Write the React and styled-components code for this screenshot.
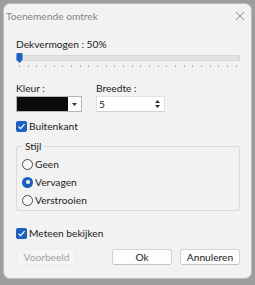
import React from "react";
import styled, { createGlobalStyle } from "styled-components";

const Global = createGlobalStyle`
  html, body { margin: 0; padding: 0; }
  body {
    background: #9d9d9d;
    font-family: Lato, "Noto Sans", sans-serif;
    font-size: 10.2px;
    color: #1b1b1b;
    width: 255px;
    height: 285px;
    overflow: hidden;
  }
`;

const Window = styled.div`
  margin: 3px 0 0 3px;
  width: 249px;
  height: 276px;
  box-sizing: border-box;
  background: #f2f2f2;
  border: 1px solid #bdbdbd;
  border-radius: 7px;
  display: flex;
  flex-direction: column;
  overflow: hidden;
`;

const TitleBar = styled.div`
  height: 23px;
  display: flex;
  align-items: center;
  justify-content: space-between;
  padding: 0 6px 0 2px;
`;

const Title = styled.span`
  color: #858585;
  font-size: 10.2px;
`;

const Content = styled.div`
  padding: 0 11px 0 12px;
  display: flex;
  flex-direction: column;
`;

const Label = styled.div`
  line-height: 14px;
  height: 14px;
  margin-top: ${(p) => p.$mt || 0}px;
  white-space: nowrap;
`;

const SliderWrap = styled.div`
  position: relative;
  margin-top: 2px;
  height: 15px;
`;

const Track = styled.div`
  margin-top: 2px;
  height: 4px;
  background: #e3e3e3;
  border: 1px solid #d6d6d6;
  border-radius: 1px;
`;

const Thumb = styled.svg`
  position: absolute;
  left: 0;
  top: 0;
`;

const Ticks = styled.div`
  display: flex;
  justify-content: space-between;
  padding: 0 3px;
  margin-top: 4px;
`;

const Tick = styled.span`
  width: 1px;
  height: 2px;
  background: #b4b4b4;
`;

const Row = styled.div`
  display: flex;
  gap: ${(p) => p.$gap || 0}px;
  margin-top: ${(p) => p.$mt || 0}px;
`;

const Field = styled.div`
  display: flex;
  flex-direction: column;
  gap: 1px;
  width: ${(p) => p.$w}px;
`;

const ColorBox = styled.div`
  height: 16px;
  box-sizing: border-box;
  border: 1px solid #b5b5b5;
  background: #fbfbfb;
  display: flex;
  align-items: stretch;
`;

const Swatch = styled.div`
  flex: 1;
  background: #0b0b0b;
`;

const Drop = styled.div`
  width: 13px;
  display: flex;
  align-items: center;
  justify-content: center;
`;

const Spin = styled.div`
  height: 16px;
  box-sizing: border-box;
  border: 1px solid #e2e2e2;
  border-bottom-color: #cfcfcf;
  background: #ffffff;
  display: flex;
  align-items: center;
  padding-left: 2px;
`;

const SpinValue = styled.span`
  flex: 1;
`;

const SpinBtns = styled.div`
  width: 9px;
  margin-right: 2px;
  display: flex;
  flex-direction: column;
  align-items: center;
  gap: 2px;
`;

const CheckRow = styled.div`
  display: flex;
  align-items: center;
  gap: 2px;
  height: 14px;
  margin-top: ${(p) => p.$mt || 0}px;
`;

const Box = styled.span`
  width: 11px;
  height: 11px;
  box-sizing: border-box;
  border-radius: 2px;
  background: #1d5fbf;
  display: flex;
  align-items: center;
  justify-content: center;
`;

const Group = styled.fieldset`
  margin: 6px 0 0 0;
  padding: 0 4px 3px 5px;
  border: 1px solid #dadada;
  border-radius: 2px;
  display: flex;
  flex-direction: column;
  gap: 4px;
`;

const Legend = styled.legend`
  padding: 0 3px;
  line-height: 14px;
  margin-left: 0;
`;

const RadioRow = styled.div`
  display: flex;
  align-items: center;
  gap: 2px;
  height: 14px;
  &:first-of-type { margin-top: 4px; }
`;

const Radio = styled.span`
  width: 11px;
  height: 11px;
  box-sizing: border-box;
  border-radius: 50%;
  border: ${(p) => (p.$on ? "none" : "1px solid #4a4a4a")};
  background: ${(p) => (p.$on ? "#1d5fbf" : "#f7f7f7")};
  display: flex;
  align-items: center;
  justify-content: center;
  &::after {
    content: "";
    display: ${(p) => (p.$on ? "block" : "none")};
    width: 4px;
    height: 4px;
    border-radius: 50%;
    background: #fff;
  }
`;

const Buttons = styled.div`
  display: flex;
  gap: 8px;
  margin-top: 9px;
`;

const Button = styled.button`
  width: ${(p) => p.$w || 60}px;
  height: 16px;
  padding: 0;
  font: inherit;
  line-height: 14px;
  border-radius: 3px;
  border: 1px solid ${(p) => (p.disabled ? "#ececec" : "#d3d3d3")};
  border-bottom-color: ${(p) => (p.disabled ? "#ececec" : "#c2c2c2")};
  background: ${(p) => (p.disabled ? "#f5f5f5" : "#fdfdfd")};
  color: ${(p) => (p.disabled ? "#a3a3a3" : "#1b1b1b")};
  margin-left: ${(p) => (p.$push ? "auto" : "0")};
`;

const Check = () => (
  <svg width="9" height="9" viewBox="0 0 9 9">
    <path d="M1.5 4.6 L3.6 6.6 L7.6 2.2" fill="none" stroke="#fff" strokeWidth="1.2" />
  </svg>
);

export default function App() {
  const ticks = Array.from({ length: 26 });
  return (
    <>
      <Global />
      <Window>
        <TitleBar>
          <Title>Toenemende omtrek</Title>
          <svg width="10" height="10" viewBox="0 0 10 10">
            <path d="M1 1 L9 9 M9 1 L1 9" stroke="#8a8a8a" strokeWidth="1" />
          </svg>
        </TitleBar>
        <Content>
          <Label $mt={10}>Dekvermogen : 50%</Label>
          <SliderWrap>
            <Track />
            <Ticks>
              {ticks.map((_, i) => (
                <Tick key={i} />
              ))}
            </Ticks>
            <Thumb width="7" height="10" viewBox="0 0 7 10">
              <path d="M0.5 1 Q0.5 0 1.5 0 L5.5 0 Q6.5 0 6.5 1 L6.5 7 L3.5 10 L0.5 7 Z" fill="#1a63c6" />
            </Thumb>
          </SliderWrap>
          <Row $gap={14} $mt={13}>
            <Field $w={66}>
              <Label>Kleur :</Label>
              <ColorBox>
                <Swatch />
                <Drop>
                  <svg width="5" height="3" viewBox="0 0 5 3">
                    <path d="M0 0 L5 0 L2.5 3 Z" fill="#333" />
                  </svg>
                </Drop>
              </ColorBox>
            </Field>
            <Field $w={69}>
              <Label>Breedte :</Label>
              <Spin>
                <SpinValue>5</SpinValue>
                <SpinBtns>
                  <svg width="5" height="3" viewBox="0 0 5 3">
                    <path d="M0 3 L5 3 L2.5 0 Z" fill="#333" />
                  </svg>
                  <svg width="5" height="3" viewBox="0 0 5 3">
                    <path d="M0 0 L5 0 L2.5 3 Z" fill="#333" />
                  </svg>
                </SpinBtns>
              </Spin>
            </Field>
          </Row>
          <CheckRow $mt={7}>
            <Box>
              <Check />
            </Box>
            <span>Buitenkant</span>
          </CheckRow>
          <Group>
            <Legend>Stijl</Legend>
            <RadioRow>
              <Radio />
              <span>Geen</span>
            </RadioRow>
            <RadioRow>
              <Radio $on />
              <span>Vervagen</span>
            </RadioRow>
            <RadioRow>
              <Radio />
              <span>Verstrooien</span>
            </RadioRow>
          </Group>
          <CheckRow $mt={15}>
            <Box>
              <Check />
            </Box>
            <span>Meteen bekijken</span>
          </CheckRow>
          <Buttons>
            <Button $w={61} disabled>
              Voorbeeld
            </Button>
            <Button $push>Ok</Button>
            <Button>Annuleren</Button>
          </Buttons>
        </Content>
      </Window>
    </>
  );
}
